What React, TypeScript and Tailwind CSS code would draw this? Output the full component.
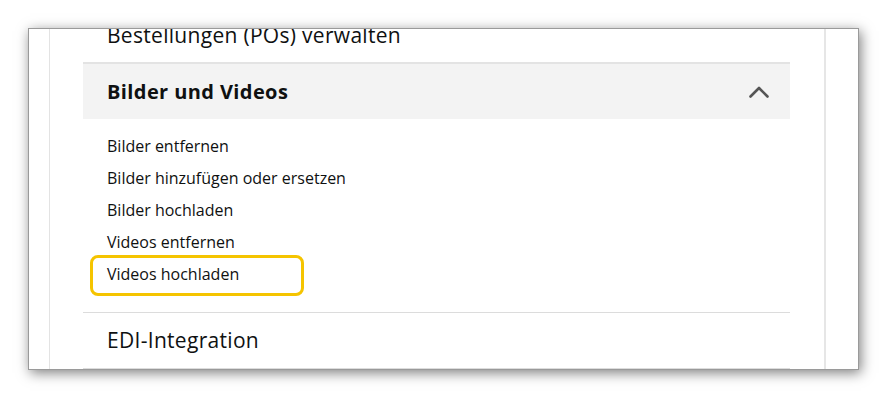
import React from "react";

const items = [
  "Bilder entfernen",
  "Bilder hinzufügen oder ersetzen",
  "Bilder hochladen",
  "Videos entfernen",
  "Videos hochladen",
];

export default function App() {
  return (
    <div
      className="w-[888px] h-[400px] bg-white pt-[28px] pl-[28px] overflow-hidden"
      style={{ fontFamily: '"Open Sans", "Noto Sans", sans-serif' }}
    >
      <div className="w-[831px] h-[342px] bg-white border border-[#9a9a9a] shadow-[2px_3px_12px_rgba(0,0,0,0.5)] overflow-hidden flex">
        <div className="w-[20px] shrink-0" />
        <div className="w-px shrink-0 bg-[#e3e3e3]" />
        <div className="w-[774px] shrink-0 pl-[33px] pr-[34px]">
          <div className="mt-[-8px] text-[#0f1111]">
            <div className="pl-[24px] pb-[13px] text-[21px] leading-[28px] tracking-[0.3px] whitespace-nowrap">
              Bestellungen (POs) verwalten
            </div>
            <div className="h-[2px] bg-[#e3e3e3]" />
            <div className="bg-[#f3f3f3] h-[55px] pl-[24px] pr-[21px] flex items-center justify-between">
              <span className="text-[20px] leading-[28px] font-bold tracking-[0.4px]">Bilder und Videos</span>
              <svg width="20" height="12" viewBox="0 0 20 12" fill="none">
                <path d="M1.5 10.5 L10 2 L18.5 10.5" stroke="#555" strokeWidth="2.6" strokeLinecap="round" strokeLinejoin="round" />
              </svg>
            </div>
            <div className="pt-[11px] pb-[22px] pl-[24px]">
              {items.map((t, i) => (
                <div key={t} className="relative h-[32px] text-[16px] leading-[32px]">
                  {t}
                  {i === items.length - 1 && (
                    <div className="absolute left-[-17px] top-[-3px] w-[214px] h-[41px] border-[3px] border-[#f5c400] rounded-[8px]" />
                  )}
                </div>
              ))}
            </div>
            <div className="h-px bg-[#dcdcdc]" />
            <div className="pl-[24px] pt-[13px] pb-[14px] text-[21px] leading-[28px] tracking-[0.3px]">EDI-Integration</div>
            <div className="h-px bg-[#dcdcdc]" />
          </div>
        </div>
        <div className="w-[2px] shrink-0 bg-[#e6e6e6]" />
        <div className="flex-1" />
      </div>
    </div>
  );
}
